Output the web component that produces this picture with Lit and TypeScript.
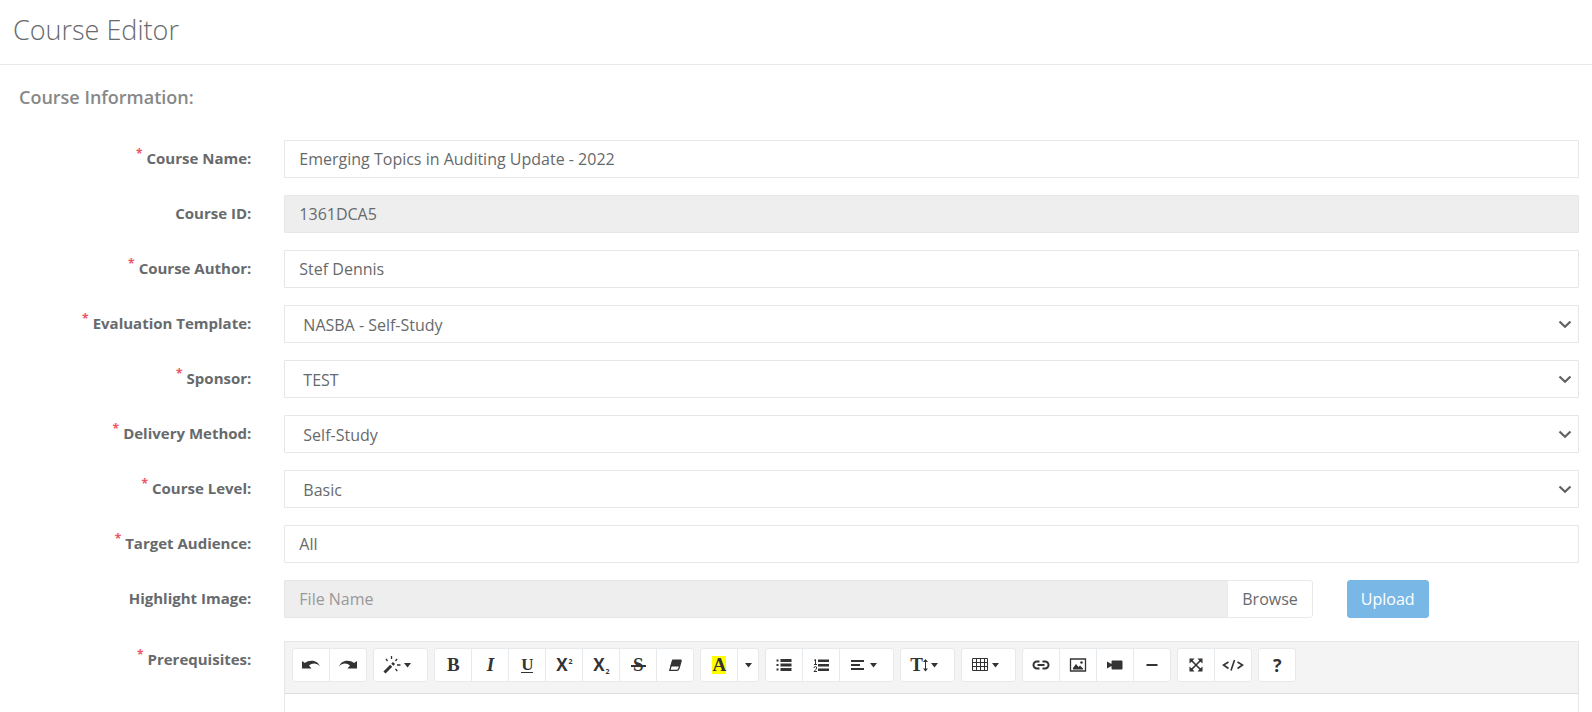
import { LitElement, html, svg, css, nothing, type TemplateResult } from "lit";
import { customElement, property } from "lit/decorators.js";

type Field = {
  id: string;
  label: string;
  kind: "text" | "select";
  value: string;
  required?: boolean;
  disabled?: boolean;
};

const FIELDS: Field[] = [
  { id: "name", label: "Course Name:", kind: "text", value: "Emerging Topics in Auditing Update - 2022", required: true },
  { id: "cid", label: "Course ID:", kind: "text", value: "1361DCA5", disabled: true },
  { id: "author", label: "Course Author:", kind: "text", value: "Stef Dennis", required: true },
  { id: "template", label: "Evaluation Template:", kind: "select", value: "NASBA - Self-Study", required: true },
  { id: "sponsor", label: "Sponsor:", kind: "select", value: "TEST", required: true },
  { id: "delivery", label: "Delivery Method:", kind: "select", value: "Self-Study", required: true },
  { id: "level", label: "Course Level:", kind: "select", value: "Basic", required: true },
  { id: "audience", label: "Target Audience:", kind: "text", value: "All", required: true },
];

const icon = (body: unknown) =>
  html`<svg class="icon" viewBox="0 0 18 18" width="18" height="18" aria-hidden="true">${body}</svg>`;

const caret = html`<svg class="caret" viewBox="0 0 7 5" width="7" height="5" aria-hidden="true"><path d="M0 0h7L3.5 4.5z" /></svg>`;

const ICONS: Record<string, TemplateResult> = {
  undo: icon(svg`<path d="M0 5L3 7C7 3.8 15 3.4 18 10.4C14.500 6.600 10 6.800 7 9.600L9.500 12.500H0z" />`),
  redo: icon(svg`<path d="M18 5L15 7C11 3.8 3 3.4 0 10.400C3.500 6.600 8 6.800 11 9.600L8.500 12.500H18z" />`),
  magic: icon(svg`
    <path class="wand" d="M1.500 16.500L8.200 9.800" />
    <path class="wand" d="M9.300 8.700L11 7" />
    <path class="line" d="M3 3l1.500 2M8.500 0v3M14 3l-1.500 2M14 9h3.500M12.500 13l1.800 2" />`),
  eraser: icon(svg`
    <path d="M6.500 3.500h9l-2.300 7H4.200z" />
    <path class="line" d="M6.800 4L3.800 14.300h7c1.300 0 1.800-.8 2.100-1.800L15.300 4.200" />`),
  bullets: icon(svg`<path d="M1.500 3.500h2v2h-2zM1.500 8h2v2h-2zM1.500 12.500h2v2h-2zM5.500 3h11v3h-11zM5.500 7.500h11v3h-11zM5.500 12h11v3h-11z" />`),
  numbers: icon(svg`
    <path d="M6 3.500h11v2.500H6zM6 8h11v2.500H6zM6 12.500h11V15H6z" />
    <path class="thin" d="M2 4.500l1.500-1v5M2 8.500h3M2 12q0-1.500 1.400-1.500T4.600 12q0 1-2.600 3.500h3" />`),
  align: icon(svg`<path d="M2 4h13v2H2zM2 8h9v2H2zM2 12h13v2H2z" />`),
  table: icon(svg`
    <path class="grid" d="M1.500 2.500h15v12h-15zM1.500 6.500h15M1.500 10.500h15M5.500 2.500v12M9.500 2.500v12M13.500 2.500v12" />`),
  link: icon(svg`
    <path class="bold" d="M7.500 5.500H5a3.500 3.500 0 0 0 0 7h2.500M10.500 5.500H13a3.500 3.500 0 0 1 0 7h-2.500M5.500 9h7" />`),
  picture: icon(svg`
    <path class="line" d="M1.500 3h15v12h-15z" />
    <path d="M4 13.500V12l3-4 2.500 3 1.500-1.500 3 3v1z" /><circle cx="12.500" cy="6.500" r="1.300" />`),
  video: icon(svg`<path d="M1 5.500L5.500 8V5.500q0-1 1-1H15.500q1 0 1 1v7q0 1-1 1H6.500q-1 0-1-1V10L1 12.500z" />`),
  minus: icon(svg`<path d="M3.500 8h11v2h-11z" />`),
  expand: icon(svg`
    <path class="mid" d="M4 4l10 10M14 4L4 14" />
    <path d="M2.500 2.500h5L6 4.200 4.200 6 2.500 7.500zM15.500 2.500h-5L12 4.200 13.800 6l1.700 1.500zM2.500 15.500h5L6 13.800 4.200 12l-1.700-1.500zM15.500 15.500h-5L12 13.800l1.800-1.800 1.700-1.500z" />`),
  code: html`<svg class="icon" viewBox="0 0 22 18" width="22" height="18" aria-hidden="true"><path class="mid" d="M6.500 6L1.500 9l5 3.500M15.500 6l5 3-5 3.500M12.500 4l-3.500 10.500" /></svg>`,
};

const size = html`<span class="size"><span class="serif">T</span><svg class="icon" viewBox="0 0 5 18" width="5" height="18" aria-hidden="true"><path class="thin" d="M2.500 4v10" /><path d="M0 6l2.500-3L5 6zM0 12.500l2.500 3 2.500-3z" /></svg></span>`;

type Tool = { title: string; face: TemplateResult; kind?: "menu" | "split" };

const TOOLS: Tool[][] = [
  [
    { title: "Undo", face: ICONS.undo },
    { title: "Redo", face: ICONS.redo },
  ],
  [{ title: "Style", face: html`${ICONS.magic}${caret}`, kind: "menu" }],
  [
    { title: "Bold", face: html`<span class="serif">B</span>` },
    { title: "Italic", face: html`<span class="serif italic">I</span>` },
    { title: "Underline", face: html`<span class="serif under">U</span>` },
    { title: "Superscript", face: html`<span class="sans">X<sup>2</sup></span>` },
    { title: "Subscript", face: html`<span class="sans">X<sub>2</sub></span>` },
    { title: "Strikethrough", face: html`<span class="serif strike">S</span>` },
    { title: "Remove font style", face: ICONS.eraser },
  ],
  [
    { title: "Recent color", face: html`<span class="serif marked">A</span>` },
    { title: "More color", face: caret, kind: "split" },
  ],
  [
    { title: "Unordered list", face: ICONS.bullets },
    { title: "Ordered list", face: ICONS.numbers },
    { title: "Paragraph", face: html`${ICONS.align}${caret}`, kind: "menu" },
  ],
  [{ title: "Line height", face: html`${size}${caret}`, kind: "menu" }],
  [{ title: "Table", face: html`${ICONS.table}${caret}`, kind: "menu" }],
  [
    { title: "Link", face: ICONS.link },
    { title: "Picture", face: ICONS.picture },
    { title: "Video", face: ICONS.video },
    { title: "Insert horizontal rule", face: ICONS.minus },
  ],
  [
    { title: "Full screen", face: ICONS.expand },
    { title: "Code view", face: ICONS.code },
  ],
  [{ title: "Help", face: html`<span class="sans help">?</span>` }],
];

@customElement("rich-editor")
export class RichEditor extends LitElement {
  @property() label = "";

  static styles = css`
    :host {
      display: block;
      border: 1px solid #e5e6e7;
      font-family: "Open Sans", sans-serif;
    }
    .toolbar {
      display: flex;
      flex-wrap: wrap;
      gap: 6px;
      padding: 6px 7px 11px;
      background: #f4f4f4;
      border-bottom: 1px solid #ddd;
    }
    .group {
      display: flex;
    }
    button {
      display: flex;
      align-items: center;
      justify-content: center;
      width: 38px;
      height: 34px;
      padding: 0;
      border: 1px solid #e7eaec;
      background: #fff;
      color: #333;
      cursor: pointer;
    }
    button + button {
      margin-left: -1px;
    }
    button:first-child {
      border-radius: 3px 0 0 3px;
    }
    button:last-child {
      border-radius: 0 3px 3px 0;
    }
    button:only-child {
      border-radius: 3px;
    }
    button.menu {
      width: 55px;
      justify-content: flex-start;
      gap: 3px;
      padding-left: 9px;
    }
    button.split {
      width: 22px;
    }
    .size {
      display: flex;
      align-items: center;
    }
    svg {
      fill: #333;
      flex: none;
    }
    .wand, .line, .grid, .thin, .mid, .bold {
      fill: none;
      stroke: #333;
    }
    .wand { stroke-width: 3; }
    .line { stroke-width: 1.3; }
    .grid, .thin { stroke-width: 1; }
    .mid { stroke-width: 1.6; }
    .bold { stroke-width: 2; }
    .serif {
      font: bold 19px/18px "Liberation Serif", serif;
    }
    .italic { font-style: italic; }
    .under {
      font-size: 17px;
      line-height: 14px;
      border-bottom: 1px solid #333;
    }
    .strike {
      padding: 0 2px;
      background: linear-gradient(#333, #333) 0 9px / 100% 2px no-repeat;
    }
    .marked {
      background: #ff0;
    }
    .sans {
      font: bold 17px/18px "Open Sans", sans-serif;
    }
    .help { font-size: 18px; }
    sup, sub {
      margin-left: 1px;
      font-size: 7px;
      line-height: 0;
    }
    sup { vertical-align: 7px; }
    sub { vertical-align: -3px; }
    .area {
      min-height: 120px;
      padding: 10px;
      outline: none;
      background: #fff;
    }
  `;

  render() {
    return html`
      <div class="toolbar" role="toolbar" aria-label="Formatting">
        ${TOOLS.map(
          (group) => html`<div class="group">
            ${group.map(
              (t) => html`<button type="button" class=${t.kind ?? "plain"} aria-label=${t.title}>${t.face}</button>`,
            )}
          </div>`,
        )}
      </div>
      <div class="area" contenteditable="true" role="textbox" aria-multiline="true" aria-label=${this.label}></div>
    `;
  }
}

@customElement("app-root")
export class AppRoot extends LitElement {
  static styles = css`
    :host {
      display: block;
      height: 100vh;
      overflow: hidden;
      background: #fff;
      color: #676a6c;
      font: 16px/24px "Open Sans", sans-serif;
    }
    * {
      box-sizing: border-box;
    }
    header {
      padding: 12px 13px 16px;
      border-bottom: 1px solid #e7eaec;
    }
    h1 {
      margin: 0;
      font-size: 27px;
      line-height: 36px;
      font-weight: 300;
    }
    h2 {
      margin: 0;
      padding: 19px 19px 0;
      font-size: 18px;
      line-height: 26px;
      font-weight: 600;
      color: #888;
    }
    form {
      display: grid;
      gap: 17px;
      padding: 30px 13px 0 5px;
    }
    .row {
      display: grid;
      grid-template-columns: calc(100% / 6 - 16px) 1fr;
      column-gap: 33px;
    }
    .label {
      padding-top: 7px;
      text-align: right;
      font-size: 15px;
      line-height: 22px;
      font-weight: 700;
    }
    .star {
      margin-right: 4px;
      color: #ed5565;
      font-size: 12px;
      line-height: 0;
      vertical-align: 6px;
    }
    .control {
      display: block;
      width: 100%;
      min-width: 0;
      height: 38px;
      padding: 0 14px;
      border: 1px solid #e5e6e7;
      border-radius: 1px;
      background-color: #fff;
      color: inherit;
      font: inherit;
    }
    .picker {
      position: relative;
    }
    select.control {
      appearance: none;
      padding: 2px 28px 0 18px;
    }
    .chevron {
      position: absolute;
      top: 15px;
      right: 7px;
      fill: none;
      stroke: #5f6264;
      stroke-width: 2.2;
      pointer-events: none;
    }
    .control:disabled {
      background-color: #eee;
      opacity: 1;
    }
    .control::placeholder {
      color: #999;
    }
    .upload-row {
      display: grid;
      grid-template-columns: 31fr 7fr;
      column-gap: 34px;
      justify-items: start;
    }
    .file {
      display: flex;
      width: 100%;
    }
    .file .control {
      flex: 1;
    }
    .btn {
      height: 38px;
      padding: 0 14px;
      border: 1px solid #e7eaec;
      border-radius: 0 3px 3px 0;
      background: #fff;
      color: inherit;
      font: inherit;
      cursor: pointer;
    }
    .file .btn {
      margin-left: -1px;
    }
    .btn.primary {
      padding: 0 13px;
      border-color: #79b7e7;
      border-radius: 3px;
      background: #79b7e7;
      color: #fff;
      font-weight: 500;
    }
    .editor-row {
      padding-top: 6px;
    }
  `;

  private label(text: string, id: string, required = false) {
    return html`<label class="label" for=${id}>${required ? html`<span class="star">*</span>` : nothing}${text}</label>`;
  }

  private control(f: Field) {
    return f.kind === "select"
      ? html`<div class="picker">
          <select class="control" id=${f.id}><option selected>${f.value}</option></select>
          <svg class="chevron" viewBox="0 0 14 9" width="14" height="9" aria-hidden="true"><path d="M1.500 1.500L7 6.800l5.500-5.300" /></svg>
        </div>`
      : html`<input class="control" id=${f.id} type="text" .value=${f.value} ?disabled=${f.disabled ?? false} />`;
  }

  render() {
    return html`
      <header><h1>Course Editor</h1></header>
      <main>
        <h2>Course Information:</h2>
        <form @submit=${(e: Event) => e.preventDefault()}>
          ${FIELDS.map((f) => html`<div class="row">${this.label(f.label, f.id, f.required)}${this.control(f)}</div>`)}
          <div class="row">
            ${this.label("Highlight Image:", "image")}
            <div class="upload-row">
              <div class="file">
                <input class="control" id="image" type="text" placeholder="File Name" disabled />
                <button class="btn" type="button">Browse</button>
              </div>
              <button class="btn primary" type="button">Upload</button>
            </div>
          </div>
          <div class="row editor-row">
            ${this.label("Prerequisites:", "prerequisites", true)}
            <rich-editor id="prerequisites" label="Prerequisites"></rich-editor>
          </div>
        </form>
      </main>
    `;
  }
}
